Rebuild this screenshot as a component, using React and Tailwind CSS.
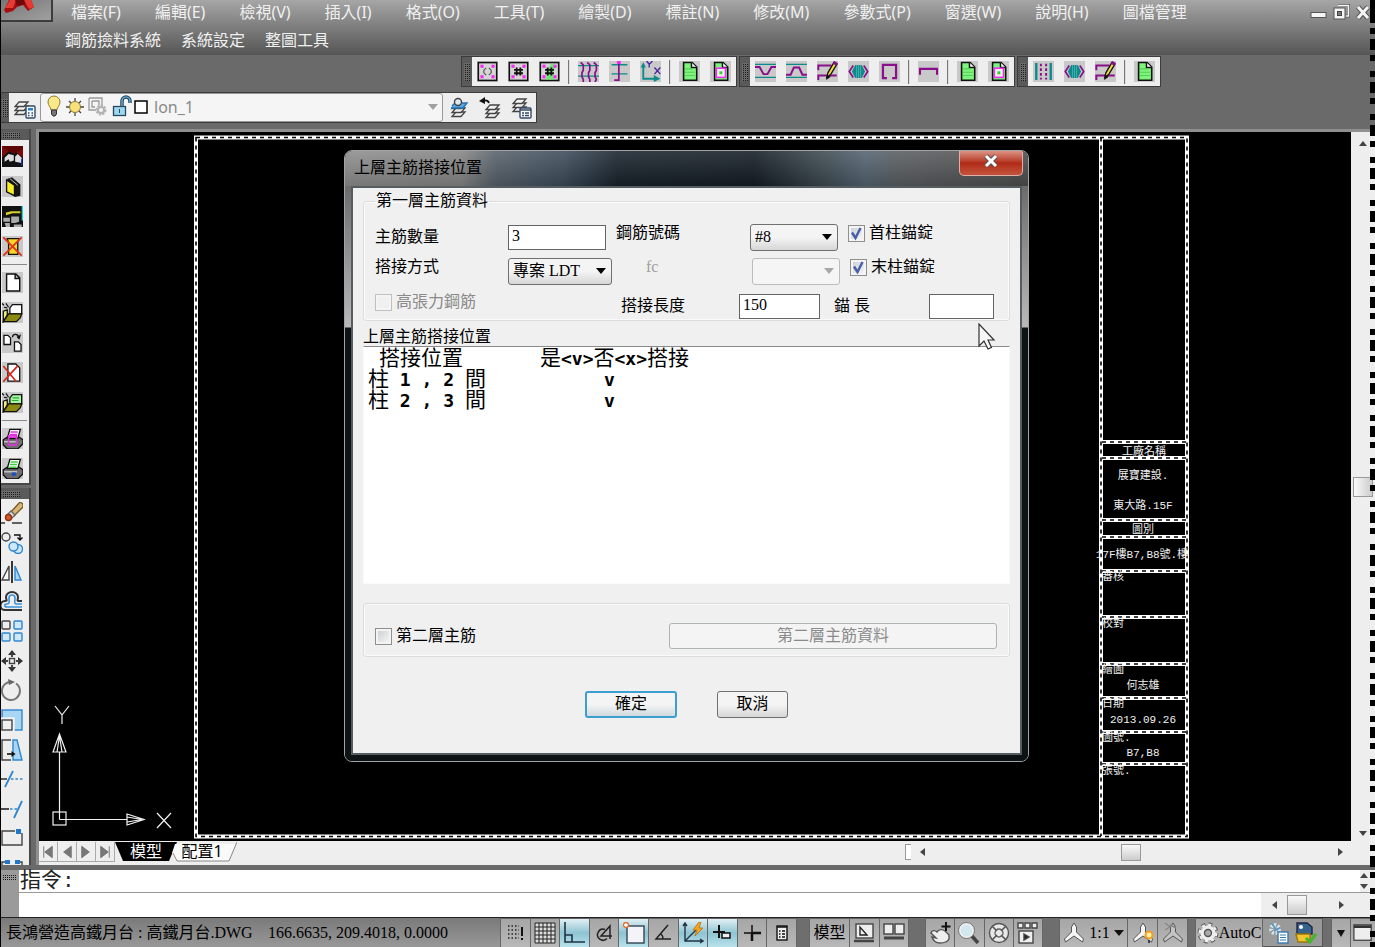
import React from "react";

const SANS = "font-['Noto_Sans','Noto_Sans_CJK_TC',sans-serif]";
const SERIF = "font-['Liberation_Serif','Noto_Sans_CJK_TC',serif]";

/* ---------- icon primitives ---------- */

function Pix({ children, tile = "#c9c9c9" }) {
  return (
    <svg viewBox="0 0 16 16" className="block h-[21px] w-[21px] shrink-0" aria-hidden="true">
      {tile && <rect width="16" height="16" fill={tile} />}
      {children}
    </svg>
  );
}

function Ico({ children, size = "h-[22px] w-[22px]" }) {
  return (
    <svg viewBox="0 0 22 22" className={`block shrink-0 ${size}`} fill="none" stroke="#444" strokeWidth="1.4" aria-hidden="true">
      {children}
    </svg>
  );
}

const Section = ({ kind }) => (
  <Pix>
    <rect x="1" y="1.2" width="14" height="13.6" fill="#d6d6d6" stroke="#111" strokeWidth="1.2" />
    {kind === "green" && <path d="M9 2h2l1 4-2 3 2 5H5l2-5V6Z" fill="#6dea6d" />}
    <g fill="#f22cf2">
      <rect x="2.6" y="2.8" width="2.4" height="2.4" />
      <rect x="11" y="2.8" width="2.4" height="2.4" />
      <rect x="2.6" y="10.8" width="2.4" height="2.4" />
      <rect x="11" y="10.8" width="2.4" height="2.4" />
    </g>
    {kind === "paren" ? (
      <path d="M7 5.200 5.200 7v2L7 10.800M9 5.200 10.800 7v2L9 10.800" fill="none" stroke="#555" strokeWidth=".9" />
    ) : (
      <path d="M6.6 5v6M9.4 5v6M4.6 6.8h6.8M4.6 9.3h6.8" fill="none" stroke="#111" strokeWidth="1.4" />
    )}
  </Pix>
);
const Waves = () => (
  <Pix>
    <path d="M0 3.5h16M0 11.5h16" stroke="#0d8a8a" strokeWidth="1" />
    <path d="M2 1l2 2v4l-1 2v3l1 2v2M7 1l2 2v4L8 9v3l1 2v2M12 1l2 2v4l-1 2v3l1 2-1 2" fill="none" stroke="#8a0f8a" strokeWidth="1.3" />
  </Pix>
);
const Hook = () => (
  <Pix>
    <path d="M2 2.800h12M2 9.800h12" stroke="#0d8a8a" strokeWidth="1.100" />
    <path d="M7.500 1v13.500H4" fill="none" stroke="#8a0f8a" strokeWidth="1.300" />
    <rect x="6" y="0" width="3" height="2.200" fill="#f22cf2" />
  </Pix>
);
const Axes = () => (
  <Pix>
    <path d="M2.500 4v9.500h10" fill="none" stroke="#0d8a8a" strokeWidth="1.400" />
    <path d="M.5 5l2-4 2 4zM10.500 10.700l5 2.800-5 2.500z" fill="#0d8a8a" />
    <path d="M5 0l2 2.500L9.500 0M7 2.500V5M11 5l4.500 5M15.500 5 11 10" fill="none" stroke="#4a20a0" strokeWidth="1" />
  </Pix>
);
const GreenDoc = ({ inner }) => (
  <Pix>
    <path d="M3.500 1.200h6.500l3.500 3.500v10h-10z" fill="#7df57d" stroke="#111" strokeWidth="1.200" />
    <path d="M9.500 1.200v3.800h4" fill="#fff" stroke="#111" strokeWidth="1.100" />
    <path d="M4.500 6h6M4.500 8.500h7.500M4.500 11h7.500" stroke="#54d054" strokeWidth=".8" />
    {inner && (
      <g>
        <rect x="4.800" y="5.500" width="7" height="7" fill="#e8f5e8" stroke="#f22cf2" strokeWidth="1.200" />
        <rect x="7.200" y="7.900" width="2.200" height="2.200" fill="#3cc63c" />
      </g>
    )}
  </Pix>
);
const Bend = ({ up }) => (
  <Pix>
    <path d="M0 2.500h16M0 12.500h16" stroke="#0d8a8a" strokeWidth="1" />
    <path d={up ? "M0 10.500h3.500L6 5h4l2.500 5.500H16" : "M0 4.500h3.500l3 5.500h3l3-5.500H16"} fill="none" stroke="#8a0f8a" strokeWidth="1.500" />
  </Pix>
);
const Pencil = () => (
  <Pix>
    <path d="M1 7V3.500h10M1 14.500V11h14" fill="none" stroke="#8a0f8a" strokeWidth="1.500" />
    <path d="M7.500 12.500l.8-3.500L13 .8l2.300 1.400-4.800 8z" fill="#f5dc3c" stroke="#111" strokeWidth="1" />
    <path d="M7 14.500l.5-4 3 1.500z" fill="#111" />
    <path d="M12 2l2.800 1.600 1-2.100L13.200 0z" fill="#8a0f8a" />
  </Pix>
);
const Bulge = () => (
  <Pix>
    <path d="M5.500 3h5l2.500 5-2.500 5h-5L3 8z" fill="#0d8a8a" />
    <path d="M6.500 3v10M8 3v10M9.500 3v10" stroke="#55b5b5" strokeWidth=".6" />
    <path d="M4 3.500 1 8l3 4.500M12 3.500 15 8l-3 4.500" fill="none" stroke="#8a0f8a" strokeWidth="1.300" />
  </Pix>
);
const Loop = () => (
  <Pix>
    <path d="M6 13H3V3h10v10h-3" fill="none" stroke="#8a0f8a" strokeWidth="1.700" />
  </Pix>
);
const Bracket = () => (
  <Pix>
    <path d="M1.500 10.500V6h13v4.500" fill="none" stroke="#8a0f8a" strokeWidth="1.600" />
  </Pix>
);
const Dots = () => (
  <Pix>
    <path d="M2.500 1.500v13M13.500 1.500v13" stroke="#0d8a8a" strokeWidth="1.800" />
    <path d="M6 2v12M10 2v12" stroke="#8a0f8a" strokeWidth="1.500" strokeDasharray="2 1.600" />
  </Pix>
);

const Layers = ({ x = 0, y = 0, top = "#f2f2f2" }) => (
  <g transform={`translate(${x} ${y})`} strokeWidth="1.300">
    <path d="M1 14.500h9l4-4.500H5z" fill="#f2f2f2" />
    <path d="M1 10.500h9l4-4.500H5z" fill="#f2f2f2" />
    <path d="M1 6.500h9L14 2H5z" fill={top} />
  </g>
);

/* ---------- generic pieces ---------- */

const DOTS = "bg-[linear-gradient(90deg,#6a6a6a_1px,transparent_1px),linear-gradient(180deg,#6a6a6a_1px,#1c1c1c_1px)] bg-[size:2px_2px]";

function Grip({ vertical, narrow }) {
  return (
    <div
      className={
        vertical
          ? `flex shrink-0 items-center justify-center bg-[#5a5a5a] ${narrow ? "w-2" : "w-[10px]"}`
          : "flex h-[11px] shrink-0 items-center bg-[#5a5a5a] pl-px"
      }
    >
      <div className={`${DOTS} ${vertical ? "h-[18px] w-[6px]" : "h-[6px] w-[18px]"}`} />
    </div>
  );
}

function Tool({ label, children }) {
  return (
    <button type="button" aria-label={label} className="flex w-[31px] shrink-0 items-center justify-center">
      {children}
    </button>
  );
}
const VSep = () => <div className="mx-[3px] h-6 w-[2px] shrink-0 border-l border-[#777] bg-[#ddd]" />;

function ToolGroup({ children }) {
  return (
    <div className="flex h-[31px] border border-[#3c3c3c] bg-[#eee]">
      <Grip vertical />
      <div className="flex items-center">{children}</div>
    </div>
  );
}

function Tri({ dir, color = "#444" }) {
  const d = { up: "M0 6 4 1l4 5z", down: "M0 2l4 5 4-5z", left: "M6 0 1 4l5 4z", right: "M2 0l5 4-5 4z" }[dir];
  return (
    <svg viewBox="0 0 8 8" className="h-2 w-2" aria-hidden="true">
      <path d={d} fill={color} />
    </svg>
  );
}

/* ---------- menu ---------- */

const MENU = ["檔案(F)", "編輯(E)", "檢視(V)", "插入(I)", "格式(O)", "工具(T)", "繪製(D)", "標註(N)", "修改(M)", "參數式(P)", "窗選(W)", "說明(H)", "圖檔管理"];
const MENU2 = ["鋼筋撿料系統", "系統設定", "整圖工具"];

function Header() {
  return (
    <header className="relative h-[55px] shrink-0 bg-linear-to-b from-[#a6a6a6] to-[#565656]">
      <div className="absolute top-0 left-0 h-[22px] w-[52px] border-r-2 border-b-2 border-[#3c3c3c] bg-linear-to-br from-[#777] to-[#a0a0a0]">
        <svg viewBox="0 0 50 20" className="h-5 w-[50px]" aria-hidden="true">
          <path d="M3 10 8 0h22l3 7-6 4-5-6-6 2-4 4-7 2z" fill="#a50f12" />
          <path d="M4 8 9 0h6l-3 8zM23 0h7l3 7-5 2z" fill="#e63a32" />
          <path d="M14 0h9l1 4-8 2z" fill="#6e0a0c" />
        </svg>
      </div>
      <nav className="flex h-6 items-center gap-[34px] pr-[60px] pl-[70px] text-base leading-6 whitespace-nowrap text-[#f0f0f0]">
        {MENU.map((m) => (
          <button type="button" key={m}>{m}</button>
        ))}
      </nav>
      <nav className="flex items-center gap-5 pt-1 pl-16 text-base leading-6 text-[#f0f0f0]">
        {MENU2.map((m) => (
          <button type="button" key={m}>{m}</button>
        ))}
      </nav>
      <div className="absolute top-1 right-[9px] flex items-center gap-[6px]">
        <button type="button" aria-label="最小化">
          <svg viewBox="0 0 17 17" className="h-[17px] w-[17px]"><rect x="1" y="8.500" width="15" height="5" fill="#f5f5f5" stroke="#555" /></svg>
        </button>
        <button type="button" aria-label="還原">
          <svg viewBox="0 0 17 17" className="h-[17px] w-[17px]">
            <path d="M5 1h11v11h-3" fill="none" stroke="#555" strokeWidth="3" />
            <path d="M5 1.500h10.500V12H13" fill="none" stroke="#f5f5f5" strokeWidth="1.500" />
            <rect x="1" y="4" width="11" height="11" fill="#f5f5f5" stroke="#555" />
            <rect x="4.500" y="7.500" width="4" height="4" fill="#777" stroke="#444" />
          </svg>
        </button>
        <button type="button" aria-label="關閉" className="w-[10px]">
          <svg viewBox="0 0 15 17" className="h-[17px] w-[15px]">
            <path d="M2 3l10 11M12 3 2 14" stroke="#555" strokeWidth="5" />
            <path d="M2 3l10 11M12 3 2 14" stroke="#f5f5f5" strokeWidth="3" />
          </svg>
        </button>
      </div>
    </header>
  );
}

function Toolbars() {
  return (
    <div className="flex shrink-0 flex-col gap-[5px] pt-px pb-[6px]">
      <div className="flex gap-[2px] pl-[460px]">
        <ToolGroup>
          <Tool label="斷面"><Section kind="paren" /></Tool>
          <Tool label="柱斷面"><Section kind="hash" /></Tool>
          <Tool label="樑斷面"><Section kind="green" /></Tool>
          <VSep />
          <Tool label="彎筋"><Waves /></Tool>
          <Tool label="彎鉤"><Hook /></Tool>
          <Tool label="座標"><Axes /></Tool>
          <VSep />
          <Tool label="報表"><GreenDoc /></Tool>
          <Tool label="斷面報表"><GreenDoc inner /></Tool>
        </ToolGroup>
        <ToolGroup>
          <Tool label="下彎"><Bend /></Tool>
          <Tool label="上彎"><Bend up /></Tool>
          <Tool label="編輯主筋"><Pencil /></Tool>
          <Tool label="續接"><Bulge /></Tool>
          <Tool label="箍筋"><Loop /></Tool>
          <VSep />
          <Tool label="繫筋"><Bracket /></Tool>
          <VSep />
          <Tool label="報表"><GreenDoc /></Tool>
          <Tool label="斷面報表"><GreenDoc inner /></Tool>
        </ToolGroup>
        <ToolGroup>
          <Tool label="柱筋"><Dots /></Tool>
          <Tool label="柱續接"><Bulge /></Tool>
          <Tool label="編輯柱筋"><Pencil /></Tool>
          <VSep />
          <Tool label="報表"><GreenDoc /></Tool>
        </ToolGroup>
      </div>
      <div className="flex">
        <div className="flex h-[31px] items-center border border-l-0 border-[#3c3c3c] bg-[#eee]">
          <div className="flex h-full"><Grip vertical narrow /></div>
          <Tool label="圖層性質">
            <Ico>
              <Layers y={3} />
              <rect x="12" y="9" width="9" height="12" rx="1" fill="#f5f8fc" stroke="#344a66" />
              <rect x="14" y="11" width="5" height="2.500" fill="#2b7fd0" stroke="none" />
              <path d="M14 16h1.500M17.500 16H19M14 18.500h1.500M17.500 18.500H19" stroke="#344a66" />
            </Ico>
          </Tool>
          <div className="flex h-[29px] w-[403px] items-center rounded-[3px] border border-[#999] bg-[#f5f5f5] pr-1 pb-[2px] pl-[5px]">
            <svg viewBox="0 0 104 24" className="h-6 w-[104px] shrink-0" fill="none" aria-hidden="true">
              <path d="M5 15c0-3-3-4-3-8a6 6 0 0 1 12 0c0 4-3 5-3 8z" fill="#fbe88a" stroke="#8d7b33" />
              <path d="M5.500 15h5v4l-1.500 2H7l-1.500-2z" fill="#777" stroke="#333" />
              <path d="M29 3v18M20 12h18M23 6l12 12M35 6 23 18" stroke="#444" strokeWidth="1.300" />
              <circle cx="29" cy="12" r="5.500" fill="#f8e07a" stroke="#8d7b33" />
              <path d="M43 3h13v9M43 3v12h7M46 6h7v4M46 6v6h3" stroke="#9a9a9a" strokeWidth="1.300" />
              <circle cx="55" cy="15" r="4" stroke="#b3b3b3" strokeWidth="3" strokeDasharray="2 1" />
              <circle cx="55" cy="15" r="3" stroke="#b3b3b3" strokeWidth="2" />
              <rect x="67.500" y="11.500" width="12" height="9" fill="#9fd8ee" stroke="#274a63" strokeWidth="1.300" />
              <path d="M76 11V6a4 4 0 0 1 8 0v2" stroke="#274a63" strokeWidth="3.500" />
              <path d="M76 11V6a4 4 0 0 1 8 0v2" stroke="#6db9dd" strokeWidth="1.200" />
              <path d="M73.500 14v4" stroke="#274a63" />
              <rect x="89" y="6" width="12" height="12" fill="#fff" stroke="#000" strokeWidth="1.500" />
            </svg>
            <div className="relative flex flex-1 items-center">
              <select aria-label="圖層" className="w-full appearance-none bg-transparent pl-1 text-base leading-6 text-[#8a8a8a] outline-none">
                <option>lon_1</option>
              </select>
              <svg viewBox="0 0 10 6" className="pointer-events-none absolute right-0 h-[6px] w-[10px]"><path d="M0 0h10L5 6z" fill="#a0a0a0" /></svg>
            </div>
          </div>
          <Tool label="設為目前圖層">
            <Ico>
              <Layers x={3} y={5} top="#58a9e6" />
              <path d="M4 9l3-3h12l-4 5H3" fill="#58a9e6" stroke="#2472b5" />
              <circle cx="10" cy="5" r="3.500" fill="#dfe9f2" />
            </Ico>
          </Tool>
          <Tool label="前次圖層">
            <Ico>
              <Layers x={6} y={6} />
              <path d="M10 6C9 3 6 3 3 4" stroke="#111" strokeWidth="1.800" />
              <path d="M6 0 0 4l6 3z" fill="#111" stroke="none" />
            </Ico>
          </Tool>
          <Tool label="圖層狀態">
            <Ico>
              <Layers x={2} y={0} />
              <rect x="10" y="11" width="11" height="10" rx="1" fill="#fff" stroke="#344a66" />
              <path d="M10 13h11M12 16h2M15 16h4M12 18.500h2M15 18.500h4" stroke="#344a66" />
            </Ico>
          </Tool>
        </div>
      </div>
    </div>
  );
}

/* ---------- left toolbars ---------- */

const Folder = ({ page }) => (
  <Pix>
    <path d="M6 8V4.500L8 2h7v7H6z" fill={page} stroke="#111" />
    {page !== "#fff" && <path d="M8 4.500h5M7.500 6.500h5" stroke="#2fae2f" strokeWidth=".9" />}
    <path d="M1 15V7l3-1v4z" fill="#f5ee7a" stroke="#111" />
    <path d="M1 15l4-6h10l-1 3-3 3z" fill="#8d8a10" stroke="#111" />
    <path d="M0 1l1.500 1.500M3 1l2 3M1.500 4 4 4.500" stroke="#111" strokeWidth=".9" />
  </Pix>
);
const Printer = ({ paper }) => (
  <Pix>
    <path d="M1 9l3-2h9l3 2v3l-4 4H4l-3-3z" fill="#6d6d6d" stroke="#111" />
    <path d="M4 8 6 1h8l-2 7z" fill="#fff" stroke="#111" />
    <path d="M6.500 3h5.500M6 5h5.500M5.500 7H11" stroke={paper} strokeWidth="1.200" />
    <path d="M1.500 10.500h10" stroke="#ccc" />
    {paper === "#e030e0" ? <path d="M5 6h6v7H5z" fill="none" stroke="#e030e0" strokeWidth="1.200" /> : <rect x="7.500" y="11" width="3" height="2.500" fill="#1450c8" />}
  </Pix>
);

function SideTool({ label, children }) {
  return <button type="button" aria-label={label} className="block shrink-0">{children}</button>;
}

function LeftTools() {
  return (
    <aside className="flex w-[30px] shrink-0 flex-col gap-[3px] overflow-hidden">
      <div className="flex flex-col border-r-2 border-b-2 border-[#484848] bg-[#eee]">
        <Grip />
        <div className="flex flex-col gap-[9px] pt-[6px] pb-1 pl-px">
          <SideTool label="啟動">
            <Pix tile="#7a0c0c">
              <path d="M0 16V9l5-5 6 1 5 4v7z" fill="#111" />
              <path d="M2 9l3-3 4 1v4l-3 1-1-2-3 2zM10 12V8l2-2 3 3v4z" fill="#ddd" />
              <path d="M0 0l16 0v2L9 6z" fill="#5c0606" />
              <path d="M15 10v5" stroke="#2233aa" />
            </Pix>
          </SideTool>
          <SideTool label="檔案夾">
            <Pix>
              <path d="M8 1l6 5v9l-4 1-6-4V2z" fill="#151515" />
              <path d="M3.500 3l6 4v8l-6-3z" fill="#f7ee25" stroke="#111" />
              <path d="M6 2l6 5M8 1l6 5" stroke="#ccc" strokeWidth=".7" />
            </Pix>
          </SideTool>
          <SideTool label="設備">
            <Pix tile="#111">
              <path d="M15 0h1v11h-1z" fill="#19d8e0" />
              <path d="M3 5l4-1 7 0v1.500H8L3 7z" fill="#d8cf2a" />
              <path d="M1 9h5v3H1zM7 8h6v4l-3 1H7zM2 13h4v3H3zM9 14h6v2H9z" fill="#aaa" />
            </Pix>
          </SideTool>
          <SideTool label="刪除檔案夾">
            <Pix>
              <path d="M4 2h9l-1 3v9H5V5z" fill="#f7d625" stroke="#111" />
              <path d="M1 1l14 14M15 1 1 15" stroke="#e3341c" strokeWidth="1.400" />
            </Pix>
          </SideTool>
          <div className="-my-[2px] h-px w-[25px] bg-[#8a8a8a]" />
          <SideTool label="新增">
            <Pix><path d="M3.500 1.500h7l3 3v10h-10zM10 1.500V5h3.500" fill="#fff" stroke="#111" strokeWidth="1.100" /></Pix>
          </SideTool>
          <SideTool label="開啟"><Folder page="#fff" /></SideTool>
          <SideTool label="複製">
            <Pix>
              <path d="M1.500 2.500h3l2 2v5h-5zM9.500 7.500h3l2 2v5h-5z" fill="#fff" stroke="#111" />
              <path d="M8 4c0-3 4-3 5 0M11.500 3.500 13 5l1-3" fill="none" stroke="#111" />
            </Pix>
          </SideTool>
          <SideTool label="刪除">
            <Pix>
              <path d="M4.500 1.500h6l3 3v10h-9z" fill="#fff" stroke="#111" />
              <path d="M1 3l10 12M12 3 1 15" stroke="#d8281c" strokeWidth="1.300" />
            </Pix>
          </SideTool>
          <SideTool label="匯入"><Folder page="#a8f5a8" /></SideTool>
          <div className="-my-[2px] h-px w-[25px] bg-[#8a8a8a]" />
          <SideTool label="列印斷面"><Printer paper="#e030e0" /></SideTool>
          <SideTool label="列印"><Printer paper="#3ccf3c" /></SideTool>
        </div>
      </div>
      <div className="flex min-h-0 flex-1 flex-col border-r-2 border-[#484848] bg-[#eee]">
        <Grip />
        <div className="-mb-[14px] flex flex-1 flex-col justify-between pt-[3px]">
          <SideTool label="刪除物件">
            <Ico>
              <path d="M0 21h4M11 21h10" stroke="#333" />
              <path d="M10 10 19 0l3 2v3l-9 9z" fill="#d8b676" stroke="#7a5a2a" />
              <path d="M6 13l4-4 4 4-4 4z" fill="#ddd" stroke="#666" />
              <circle cx="7.500" cy="15.500" r="3" fill="#d95a26" stroke="#8a3414" />
            </Ico>
          </SideTool>
          <SideTool label="複製物件">
            <Ico>
              <circle cx="5" cy="5" r="4" />
              <path d="M13 3h6v4M16.500 5.500 19 8l2.500-2.500" stroke="#111" />
              <circle cx="17" cy="17" r="4.500" fill="#cfe8f8" stroke="#2f86cf" />
              <circle cx="12.500" cy="14.500" r="4.500" fill="#cfe8f8" stroke="#2f86cf" />
            </Ico>
          </SideTool>
          <SideTool label="鏡射">
            <Ico>
              <path d="M11 0v22" stroke="#222" strokeWidth="1.800" />
              <path d="M8 5v14H1z" fill="#fafafa" />
              <path d="M14 5v14h6z" fill="#a9d6f2" stroke="#2f86cf" />
            </Ico>
          </SideTool>
          <SideTool label="偏移">
            <Ico>
              <path d="M21 10h-4c-1 0 0-2 0-4a6 5 0 0 0-12 0c0 3 2 4-1 4a4 4 0 0 0 0 9h17" strokeWidth="2" stroke="#333" />
              <path d="M21 13h-6c-2 0-1-4-1-6a3 3 0 0 0-6 0c0 3 1 6-2 6s-3 3 0 3h15" stroke="#3a92da" strokeWidth="1.600" />
            </Ico>
          </SideTool>
          <SideTool label="陣列">
            <Ico>
              <rect x="1" y="1" width="8" height="8" rx="1" />
              <g fill="#cfe8f8" stroke="#2f86cf">
                <rect x="13" y="1" width="8" height="8" rx="1" />
                <rect x="1" y="13" width="8" height="8" rx="1" />
                <rect x="13" y="13" width="8" height="8" rx="1" />
              </g>
            </Ico>
          </SideTool>
          <SideTool label="移動">
            <Ico>
              <rect x="8.500" y="8.500" width="5" height="5" />
              <path d="M11 0l4 5H7zM11 22l4-5H7zM0 11l5-4v8zM22 11l-5-4v8z" fill="#333" stroke="none" />
              <path d="M11 4v3M11 15v3M4 11h3M15 11h3" strokeWidth="2" />
            </Ico>
          </SideTool>
          <SideTool label="旋轉">
            <Ico>
              <path d="M15 4.500a9 9 0 1 1-6-1.500" stroke="#777" strokeWidth="2" />
              <path d="M7 0l7 3-6 3z" fill="#666" stroke="none" />
            </Ico>
          </SideTool>
          <SideTool label="比例">
            <Ico>
              <rect x="1" y="1" width="20" height="20" fill="#a9d6f2" stroke="#2f86cf" />
              <rect x="-1" y="9" width="14" height="14" fill="#f4f4f4" stroke="#f4f4f4" />
              <rect x="1" y="11" width="10" height="10" fill="#f0f0f0" />
            </Ico>
          </SideTool>
          <SideTool label="拉伸">
            <Ico>
              <path d="M10 1H1v20h9" />
              <path d="M12 1h4l5 20h-9z" fill="#a9d6f2" stroke="#2f86cf" />
              <path d="M6 15h6" stroke="#111" strokeWidth="1.600" />
              <path d="M10.500 12l4 3-4 3z" fill="#111" stroke="none" />
            </Ico>
          </SideTool>
          <SideTool label="修剪">
            <Ico>
              <path d="M0 11h6" stroke="#222" />
              <path d="M10 11h12" stroke="#2f86cf" strokeDasharray="2.500 2" />
              <path d="M4 19 12 3" stroke="#2f86cf" strokeWidth="1.800" />
            </Ico>
          </SideTool>
          <SideTool label="延伸">
            <Ico>
              <path d="M0 11h8" stroke="#222" strokeWidth="1.600" />
              <path d="M9 11h7" stroke="#2f86cf" strokeDasharray="2.500 2" />
              <path d="M13 20 21 3" stroke="#2f86cf" strokeWidth="1.800" />
            </Ico>
          </SideTool>
          <SideTool label="切斷於點">
            <Ico>
              <path d="M14 4H1v14h20V6" />
              <rect x="15" y="2" width="5" height="5" fill="#1f78c8" stroke="none" />
            </Ico>
          </SideTool>
          <SideTool label="切斷">
            <Ico>
              <path d="M4 5H1v14M18 5h3v14" />
              <rect x="4" y="3" width="5" height="4" fill="#1f78c8" stroke="none" />
              <rect x="14" y="3" width="5" height="4" fill="#1f78c8" stroke="none" />
            </Ico>
          </SideTool>
        </div>
      </div>
    </aside>
  );
}

/* ---------- drawing ---------- */

const RULES = [310, 326, 388, 405, 439, 485, 532, 566, 600, 632];
const NOTES = [
  [1105, 323, "工廠名稱", "middle"],
  [1104, 347, "展寶建設.", "middle"],
  [1104, 377, "東大路.15F", "middle"],
  [1104, 401, "圖別", "middle"],
  [1103, 426, "17F樓B7,B8號.樓", "middle"],
  [1063, 448, "審核", "start"],
  [1063, 495, "校對", "start"],
  [1063, 541, "繪圖", "start"],
  [1104, 557, "何志雄", "middle"],
  [1063, 575, "日期", "start"],
  [1104, 591, "2013.09.26", "middle"],
  [1063, 609, "圖號.", "start"],
  [1104, 624, "B7,B8", "middle"],
  [1063, 642, "張號.", "start"],
];

function Drawing() {
  const d = "M157 5.500H1148V704.500H157ZM1062 5.500V704" + RULES.map((y) => `M1063 ${y}H1148`).join("");
  return (
    <svg width="1312" height="709" viewBox="0 0 1312 709" className="absolute top-0 left-0 max-w-none" aria-hidden="true">
      <path d={d} fill="none" stroke="#fff" strokeWidth="4" />
      <path d={d} fill="none" stroke="#000" strokeWidth="1.600" strokeDasharray="4 4" />
      <g fill="#f0f0f0" fontSize="11" className="font-['Liberation_Mono','Noto_Sans_CJK_TC',monospace]">
        {NOTES.map(([x, y, t, a]) => (
          <text key={t + y} x={x} y={y} textAnchor={a}>{t}</text>
        ))}
      </g>
      <g fill="none" stroke="#f2f2f2" strokeWidth="1.200">
        <rect x="14" y="680" width="13" height="13" />
        <path d="M20.500 687.500V620M20.500 687.500H88M14 620l6.500-18 6.500 18zM18 620l2.500-16 2.500 16M88 682v11l17-5.500zM88 685l15 2.500-15 2.500" />
        <path d="M16 574l7 9v9M30 574l-7 9M118 681l14 15M132 681l-14 15" />
      </g>
    </svg>
  );
}

/* ---------- dialog ---------- */

const BTN = "rounded-[3px] border border-[#707070] bg-linear-to-b from-[#f4f4f4] from-50% to-[#d6d6d6]";

function Check({ id, children, checked, disabled }) {
  return (
    <div className="flex items-center">
      <span className="relative flex h-[17px] w-[17px]">
        <input
          id={id}
          type="checkbox"
          defaultChecked={checked}
          disabled={disabled}
          className="peer h-[17px] w-[17px] appearance-none border border-[#8e8f8f] bg-linear-to-br from-[#c8ccd0] to-[#fafafa] shadow-[inset_0_0_0_2px_#f4f4f4] disabled:border-[#c0c0c0] disabled:bg-none"
        />
        <svg viewBox="0 0 17 17" className="pointer-events-none absolute inset-0 hidden peer-checked:block" fill="none">
          <path d="M4 7.500l3.500 5.500 5-10" stroke="#4a5fa8" strokeWidth="2.500" />
        </svg>
      </span>
      <label htmlFor={id} className={disabled ? "pl-1 text-[#8a8a8a]" : "pl-1"}>{children}</label>
    </div>
  );
}

function Combo({ id, value, disabled, width, label }) {
  return (
    <span className={`relative flex h-[27px] items-center ${width}`}>
      <select
        id={id}
        aria-label={label}
        disabled={disabled}
        className={`h-full w-full appearance-none pl-1 outline-none disabled:border-[#bcbcbc] disabled:bg-[#f5f5f5] disabled:bg-none ${BTN}`}
      >
        <option>{value}</option>
      </select>
      <svg viewBox="0 0 10 6" className="pointer-events-none absolute right-[6px] h-[6px] w-[10px]">
        <path d="M0 0h10L5 6z" fill={disabled ? "#a8a8a8" : "#000"} />
      </svg>
    </span>
  );
}

const FIELD = "h-[25px] border border-[#646464] bg-white px-[3px] pb-[3px] text-base leading-5 outline-none";
const BIG = "text-[21px] font-normal";

function Dialog() {
  return (
    <section
      role="dialog"
      aria-labelledby="dlg-title"
      className={`absolute top-[18px] left-[305px] flex h-[612px] w-[685px] flex-col overflow-hidden rounded-[8px] border border-[#a0a4a6] bg-[#0d1215] text-base leading-5 text-black ${SERIF}`}
    >
      <div className="flex h-[35px] shrink-0 items-start bg-[linear-gradient(180deg,rgba(255,255,255,.12),rgba(0,0,0,.15)),linear-gradient(90deg,#8d8d8d_0%,#858585_17%,#56606a_22%,#3b4b5a_32%,#18222b_40%,#131c25_60%,#3c4850_70%,#526270_76%,#585c5f_82%,#4d4d4d_100%)] pl-[9px]">
        <h1 id="dlg-title" className="flex-1 pt-[7px] text-base leading-5">上層主筋搭接位置</h1>
        <button
          type="button"
          aria-label="關閉"
          className="mr-[5px] flex h-[25px] w-[64px] items-center justify-center rounded-b-[5px] border border-t-0 border-[#e0b0a8] bg-linear-to-b from-[#dc9285] from-0% via-[#b02a16] via-50% to-[#c4533c] pb-1"
        >
          <svg viewBox="0 0 16 14" className="h-[14px] w-4">
            <path d="M3 2l10 10M13 2 3 12" stroke="#555" strokeWidth="5" />
            <path d="M3 2l10 10M13 2 3 12" stroke="#fff" strokeWidth="3" />
          </svg>
        </button>
      </div>
      <div className="flex min-h-0 flex-1 flex-col bg-[linear-gradient(180deg,#6c6c6c_0px,#b9b9b9_141px,#0d1215_142px)] px-[6px] pb-[6px]">
        <div className="flex min-h-0 flex-1 flex-col border-2 border-[#565d61] bg-[#f0f0f0] px-[10px] pt-[3px]">
          <fieldset className="flex h-[130px] flex-col rounded-[3px] border border-[#dcdcdc] px-[11px] pb-[2px] shadow-[inset_0_0_0_1px_#fafafa]">
            <legend className="px-[1px]">第一層主筋資料</legend>
            <div className="grid grid-cols-[133px_108px_134px_98px_1fr] items-center gap-y-[6px] pt-[12px]">
              <label htmlFor="count">主筋數量</label>
              <input id="count" defaultValue="3" className={`w-[98px] ${FIELD}`} />
              <label htmlFor="bar" className="self-start">鋼筋號碼</label>
              <Combo id="bar" value="#8" width="w-[88px]" />
              <div className="pb-2"><Check id="first" checked>首柱錨錠</Check></div>
              <label htmlFor="mode" className="self-start">搭接方式</label>
              <Combo id="mode" value="專案 LDT" width="w-[104px]" />
              <label htmlFor="fc" className="self-start pl-[30px] text-[#a0a0a0]">fc</label>
              <span className="pl-[2px]"><Combo id="fc" value="" disabled width="w-[88px]" /></span>
              <div className="pb-2 pl-[2px]"><Check id="last" checked>末柱錨錠</Check></div>
            </div>
            <div className="flex items-center pt-[7px]">
              <div className="w-[246px] pb-2"><Check id="hi" disabled>高張力鋼筋</Check></div>
              <label htmlFor="lap" className="w-[118px]">搭接長度</label>
              <input id="lap" defaultValue="150" className={`w-[81px] ${FIELD}`} />
              <label htmlFor="anchor" className="w-[109px] pl-[14px]">錨 長</label>
              <input id="anchor" defaultValue="" className={`w-[65px] ${FIELD}`} />
            </div>
          </fieldset>
          <h2 className="pt-[7px] text-base leading-[18px]">上層主筋搭接位置</h2>
          <div className="h-[238px] shrink-0 border border-[#fafafa] border-t-[#8a8a8a] bg-white px-1 pt-px">
            <table className="table-fixed text-left font-['DejaVu_Sans_Mono','Noto_Sans_CJK_TC',monospace] text-[18px] leading-[21px] font-bold whitespace-pre">
              <thead>
                <tr>
                  <th className={`w-[172px] p-0 pl-[11px] ${BIG}`}>搭接位置</th>
                  <th className="p-0">
                    <span className={BIG}>是</span>&lt;v&gt;<span className={BIG}>否</span>&lt;x&gt;<span className={BIG}>搭接</span>
                  </th>
                </tr>
              </thead>
              <tbody>
                {["1 , 2", "2 , 3"].map((t) => (
                  <tr key={t}>
                    <td className="p-0">
                      <span className={BIG}>柱</span> {t} <span className={BIG}>間</span>
                    </td>
                    <td className="p-0 pl-16">v</td>
                  </tr>
                ))}
              </tbody>
            </table>
          </div>
          <div className="mt-[19px] flex h-[54px] shrink-0 items-center justify-between rounded-[3px] border border-[#dcdcdc] pt-3 pr-3 pl-[11px] shadow-[inset_0_0_0_1px_#fafafa]">
            <Check id="second">第二層主筋</Check>
            <button type="button" disabled className="h-[26px] w-[328px] rounded-[3px] border border-[#adb2b5] bg-[#f4f4f4] text-[#8a8a8a]">第二層主筋資料</button>
          </div>
          <div className="flex justify-center gap-10 pt-[34px]">
            <button type="button" className="h-[27px] w-[92px] rounded-[3px] border-2 border-[#3c9fd0] bg-linear-to-b from-[#f4f4f4] from-50% to-[#d0dade] pb-[2px]">確定</button>
            <button type="button" className={`h-[27px] w-[71px] pb-[2px] ${BTN}`}>取消</button>
          </div>
        </div>
      </div>
    </section>
  );
}

function Workspace() {
  return (
    <div className="flex min-w-0 flex-1 flex-col border-t-[3px] border-l-[3px] border-[#8f8f8f]">
      <div className="flex min-h-0 flex-1">
        <main className="relative min-w-0 flex-1 overflow-hidden bg-black">
          <Drawing />
          <Dialog />
          <svg viewBox="0 0 18 28" className="absolute top-[191px] left-[939px] h-7 w-[18px]" aria-hidden="true">
            <path d="M1 1v22l5-5 4 8 3.500-1.500L10 17h6z" fill="#f8f8f8" stroke="#333" strokeWidth="1.200" />
          </svg>
        </main>
        <div className="flex w-6 shrink-0 flex-col items-center bg-[#eee]">
          <button type="button" aria-label="向上捲動" className="pt-2"><Tri dir="up" /></button>
          <div className="mt-[329px] h-5 w-5 border border-[#999] bg-linear-to-r from-[#fafafa] to-[#ccc]" />
          <button type="button" aria-label="向下捲動" className="mt-auto pb-1"><Tri dir="down" /></button>
        </div>
      </div>
      <div className="flex h-6 shrink-0 items-start bg-[#eee] pt-px">
        {["M5 3v12M14 3v12L6 9z", "M14 3v12L6 9z", "M5 3v12l8-6z", "M14 3v12M5 3v12l8-6z"].map((d, i) => (
          <button key={d} type="button" aria-label={["第一頁", "上一頁", "下一頁", "最後頁"][i]} className="h-5 w-[19px] border-r border-b border-[#aaa]">
            <svg viewBox="0 0 19 18" className="h-[18px] w-[18px]"><path d={d} fill="#777" stroke="#777" strokeWidth="1" /></svg>
          </button>
        ))}
        <button type="button" className="relative flex h-5 w-[62px] items-center justify-center text-white">
          <svg viewBox="0 0 62 20" className="absolute inset-0 h-5 w-[62px]"><path d="M0 0h62l-8 19H8z" fill="#000" /></svg>
          <span className="relative pb-[2px] leading-4">模型</span>
        </button>
        <button type="button" className="relative -ml-[6px] flex h-5 w-[66px] items-center justify-center pr-1 text-black">
          <svg viewBox="0 0 66 20" className="absolute inset-0 h-5 w-[66px]"><path d="M4 2h61l-8 17H5L1 11z" fill="#fafafa" /><path d="M66 0l-8 19H6L2 11" fill="none" stroke="#888" /></svg>
          <span className="relative pb-[2px] leading-4">配置1</span>
        </button>
        <div className="ml-auto flex h-5 items-center pr-[31px]">
          <div className="h-4 w-[6px] border border-r-0 border-[#999] bg-white" />
          <button type="button" aria-label="向左捲動" className="pl-2"><Tri dir="left" /></button>
          <div className="mr-[195px] ml-[194px] h-[17px] w-5 border border-[#999] bg-linear-to-b from-[#fafafa] to-[#ccc]" />
          <button type="button" aria-label="向右捲動"><Tri dir="right" /></button>
        </div>
      </div>
    </div>
  );
}

function CommandLine() {
  return (
    <div className="flex h-[48px] shrink-0 border-b border-[#222] bg-white">
      <div className="w-[18px] shrink-0 bg-[#9a9a9a] pt-1 pl-px">
        <div className="h-[6px] w-[14px] bg-[linear-gradient(90deg,#9a9a9a_1px,transparent_1px),linear-gradient(180deg,#9a9a9a_1px,#1c1c1c_1px)] bg-[size:2px_2px]" />
      </div>
      <div className="flex min-w-0 flex-1 flex-col">
        <div className="flex h-[23px] items-center border-b border-[#999]">
          <label htmlFor="cmd" className="pt-px pl-px font-['Liberation_Mono','Noto_Sans_CJK_TC',monospace] text-[21px] leading-[22px] text-[#222]">指令:</label>
          <div className="ml-auto flex h-full w-[15px] flex-col justify-between bg-[#eee] py-[2px]">
            <Tri dir="up" />
            <Tri dir="down" />
          </div>
        </div>
        <div className="flex min-h-0 flex-1">
          <input id="cmd" className="min-w-0 flex-1 bg-white outline-none" />
          <div className="flex w-[114px] items-center bg-[#eee] pl-[10px]">
            <Tri dir="left" />
            <div className="mx-2 h-5 w-5 border border-[#999] bg-linear-to-b from-[#fafafa] to-[#ccc]" />
            <div className="pl-[22px]"><Tri dir="right" /></div>
          </div>
        </div>
      </div>
    </div>
  );
}

/* ---------- status bar ---------- */

function SBtn({ label, on, wide = "flex-1", children }) {
  return (
    <button
      type="button"
      aria-label={label}
      className={`flex h-full min-w-0 items-center justify-center border-t border-l border-[#666] ${wide} ${on ? "bg-linear-to-b from-[#e0eff3] via-[#8ec4d2] to-[#b8e2ec]" : "bg-linear-to-b from-[#a6a6a6] to-[#b8b8b8]"}`}
    >
      {children}
    </button>
  );
}
const Group = ({ w, children }) => <div className={`flex h-full shrink-0 border-r border-[#666] ${w}`}>{children}</div>;
const Gap = ({ w }) => <div className={`h-full shrink-0 bg-[#6e6e6e] ${w}`} />;
const Person = ({ color = "#f5f5f5" }) => (
  <path d="M11 1l2.500 4v5l7 7-1 3-8.500-6-8.500 6-1-3 7-7V5z" fill={color} stroke="#555" strokeWidth="1" />
);

function StatusBar() {
  return (
    <footer className={`flex h-[29px] shrink-0 items-center overflow-hidden bg-linear-to-b from-[#7a7a7a] to-[#989898] text-base leading-6 whitespace-nowrap text-black ${SERIF}`}>
      <div className="w-[267px] shrink-0 pl-[5px]">長鴻營造高鐵月台 : 高鐵月台.DWG</div>
      <div className="w-[232px] shrink-0">166.6635, 209.4018, 0.0000</div>
      <Group w="w-[297px]">
        <SBtn label="鎖點"><Ico><path d="M4 4h11M4 8h11M4 12h11M4 16h11" stroke="#222" strokeDasharray="1.500 2" /><path d="M18 5v9M18 16v2" stroke="#111" strokeWidth="2" /></Ico></SBtn>
        <SBtn label="格點"><Ico><path d="M1 1h20v20H1zM5 1v20M9 1v20M13 1v20M17 1v20M1 5h20M1 9h20M1 13h20M1 17h20" stroke="#222" fill="#ddd" strokeWidth="1" /></Ico></SBtn>
        <SBtn label="正交" on><Ico><path d="M2 0v20h20M2 13h7v7" stroke="#234" strokeWidth="1.600" /></Ico></SBtn>
        <SBtn label="極座標"><Ico><path d="M19 14H8L17 4v13M12 7.500a5.500 5.500 0 1 0 2 9" stroke="#222" strokeWidth="1.500" /></Ico></SBtn>
        <SBtn label="物件鎖點" on><Ico><rect x="4" y="4" width="17" height="17" fill="#f4f4f8" stroke="#345" /><circle cx="3" cy="3" r="2.500" fill="#fff" stroke="#e07030" /></Ico></SBtn>
        <SBtn label="追蹤"><Ico><path d="M16 3 4 17h15M9 12a6 6 0 0 1 2 5" stroke="#222" strokeWidth="1.500" /></Ico></SBtn>
        <SBtn label="動態 UCS" on><Ico><path d="M3 1v18h18M1 4l2-3 2 3M18 17l3 2-3 2M3 19 14 8" stroke="#234" /><path d="M17 0l-6 8h4l-2 6 8-8h-4l2-6z" fill="#f5a623" stroke="#b5700f" strokeWidth=".8" /></Ico></SBtn>
        <SBtn label="動態輸入" on><Ico><path d="M2 10h12M8 3v13" stroke="#111" strokeWidth="2" /><rect x="11" y="11" width="8" height="5" fill="#eee" stroke="#111" strokeWidth="1.500" /></Ico></SBtn>
        <SBtn label="線粗"><Ico><path d="M3 11h8M11 3v8" stroke="#111" strokeWidth="1.500" /><path d="M11 11h9M11 11v8" stroke="#111" strokeWidth="2.500" /></Ico></SBtn>
        <SBtn label="快速性質"><Ico><rect x="6" y="4" width="10" height="14" fill="#eee" stroke="#111" /><path d="M6 5h10M8 9h1.500M11 9h3M8 12h1.500M11 12h3M8 15h1.500M11 15h3" stroke="#111" /></Ico></SBtn>
      </Group>
      <Gap w="w-3" />
      <Group w="w-[100px]">
        <SBtn label="模型空間" wide="w-10">模型</SBtn>
        <SBtn label="配置"><Ico><rect x="3" y="2" width="17" height="14" fill="#eee" stroke="#444" /><path d="M7 5v8h7z" stroke="#222" /><path d="M1 19h20" strokeWidth="2.500" /></Ico></SBtn>
        <SBtn label="快速檢視配置"><Ico><rect x="1" y="2" width="9" height="10" fill="#eee" /><rect x="12" y="2" width="9" height="10" fill="#eee" /><path d="M1 16h20" strokeWidth="3" /></Ico></SBtn>
      </Group>
      <Gap w="w-4" />
      <Group w="w-[118px]">
        <SBtn label="平移"><Ico><path d="M2 11c1-3 4-3 6-1 2-3 5-3 8-1l4 4v4c-2 4-6 4-9 4-4 0-7-3-8-6l4 1z" fill="#eee" stroke="#555" /><path d="M17 0v9M12.500 4.500h9" stroke="#111" strokeWidth="2" /></Ico></SBtn>
        <SBtn label="縮放"><Ico><path d="M13 13l7 8" stroke="#444" strokeWidth="3.500" /><circle cx="8.500" cy="8.500" r="7" fill="#d3e8ee" stroke="#eee" strokeWidth="2.500" /><circle cx="8.500" cy="8.500" r="8" stroke="#555" strokeWidth=".8" /></Ico></SBtn>
        <SBtn label="操控盤"><Ico><circle cx="11" cy="11" r="9.500" fill="#e8e8e8" stroke="#555" /><circle cx="11" cy="11" r="4" stroke="#666" /><path d="M4 4l5 5M18 4l-5 5M4 18l5-5M18 18l-5-5" stroke="#555" strokeWidth="1.600" /></Ico></SBtn>
        <SBtn label="動作"><Ico><path d="M1 1h5v5H1zM8 1h5v5H8zM15 1h5v5h-5z" fill="#eee" /><rect x="2" y="9" width="14" height="12" fill="#eee" /><path d="M7 12l5 3-5 3z" fill="#222" /></Ico></SBtn>
      </Group>
      <Gap w="w-4" />
      <Group w="w-[129px]">
        <SBtn label="註解比例" wide="w-[68px] gap-1">
          <Ico><Person /></Ico>1:1
          <svg viewBox="0 0 10 6" className="h-[6px] w-[10px]"><path d="M0 0h10L5 6z" fill="#111" /></svg>
        </SBtn>
        <SBtn label="註解可見性"><Ico><Person /><circle cx="17" cy="13" r="3.500" fill="#fff3a0" stroke="#f59a23" strokeWidth="2" /><path d="M17 18v3" stroke="#345" strokeWidth="2" /></Ico></SBtn>
        <SBtn label="自動比例"><Ico><Person color="#c4c4c4" /><path d="M3 1l5 4-5 3M8 3l6 3" stroke="#888" /></Ico></SBtn>
      </Group>
      <Gap w="w-[7px]" />
      <Group w="w-[68px]">
        <SBtn label="工作區">
          <Ico><circle cx="11" cy="11" r="8.500" stroke="#555" strokeWidth="4" strokeDasharray="3.700 3" /><circle cx="11" cy="11" r="8.300" stroke="#eee" strokeWidth="2.500" strokeDasharray="3.200 3.300" /><circle cx="11" cy="11" r="6" fill="#eee" stroke="#eee" strokeWidth="3" /><circle cx="11" cy="11" r="3.500" fill="#aaa" stroke="#555" /></Ico>
          <span>AutoC</span>
        </SBtn>
      </Group>
      <div className="flex h-full w-[60px] shrink-0 items-center gap-[5px] border border-l-0 border-[#555] bg-[#9a9a9a] pl-[5px]">
        <Ico>
          <circle cx="7" cy="7" r="4" stroke="#d5e4ec" strokeWidth="4" strokeDasharray="2 1.500" />
          <path d="M3 1l5 6M12 6 6 9" stroke="#5a9ac8" />
          <rect x="10" y="10" width="10" height="11" fill="#fff" stroke="#3a7ab0" />
          <path d="M12 13h6M12 15.500h6M12 18h6" stroke="#3a7ab0" strokeWidth="1" />
        </Ico>
        <Ico>
          <path d="M2 1h10l5 4v7H2z" fill="#35648c" stroke="#224" />
          <path d="M1 12h14v8H3z" fill="#f2c530" stroke="#997a10" />
          <circle cx="6" cy="5" r="2" fill="#fff" stroke="none" />
          <path d="M11 16l4 4 6-8" stroke="#45b52c" strokeWidth="3" />
        </Ico>
      </div>
      <Gap w="w-2" />
      <SBtn label="狀態列功能表" wide="w-[19px] shrink-0">
        <svg viewBox="0 0 8 8" className="h-2 w-2"><path d="M0 1h8L4 8z" fill="#111" /></svg>
      </SBtn>
      <SBtn label="清爽螢幕">
        <Ico size="h-[22px] w-5"><rect x="1" y="2" width="19" height="17" fill="#eee" stroke="#444" /><path d="M1 4h19" stroke="#333" strokeWidth="3" /></Ico>
      </SBtn>
    </footer>
  );
}

export default function App() {
  return (
    <div className={`relative flex h-screen min-h-[600px] w-full flex-col overflow-hidden border-l border-black bg-[#6a6a6a] ${SANS}`}>
      <Header />
      <Toolbars />
      <div className="flex min-h-0 flex-1 gap-[5px] pb-[5px]">
        <LeftTools />
        <Workspace />
      </div>
      <CommandLine />
      <StatusBar />
      <div className="pointer-events-none absolute inset-y-0 right-0 w-[5px] bg-[linear-gradient(180deg,#000_23px,transparent_23px),repeating-linear-gradient(180deg,#000_0px_7px,transparent_7px_12px,#000_12px_18px,transparent_18px_28px,#000_28px_34px,transparent_34px_39px,#000_39px_43px)]" />
    </div>
  );
}
